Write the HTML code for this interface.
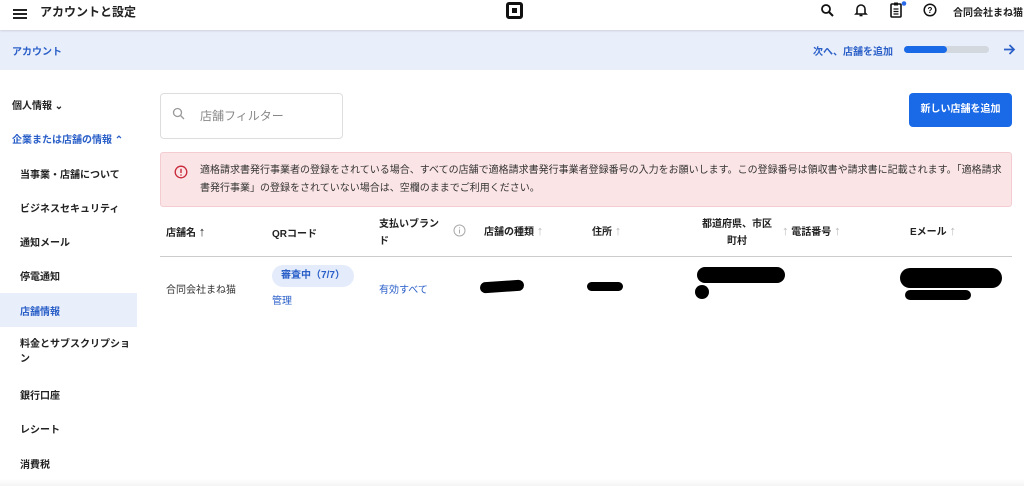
<!DOCTYPE html>
<html><head><meta charset="utf-8"><style>
*{margin:0;padding:0;box-sizing:border-box}
body{width:1024px;height:486px;overflow:hidden;background:#fff;font-family:"Liberation Sans","Noto Sans CJK JP",sans-serif;color:#222;position:relative}
.a{position:absolute;white-space:nowrap}
.hdr{position:absolute;left:0;top:0;width:1024px;height:30px;background:#fff;box-shadow:0 1px 2px rgba(0,0,0,.12);z-index:2}
.band{position:absolute;left:0;top:30px;width:1024px;height:40px;background:#e8eefa}
.side{font-size:10px;font-weight:bold;color:#222}
.blue{color:#2a5fc8}
.th{font-size:10px;font-weight:bold;color:#222}
.arr{color:#bbb;font-weight:normal;font-size:13px}
.blot{position:absolute;background:#000;border-radius:8px}
</style></head><body>
<div class="hdr">
 <div class="a" style="left:13px;top:9px;width:14px;height:2px;background:#222;box-shadow:0 4px 0 #222,0 8px 0 #222"></div>
 <div class="a" style="left:40px;top:3px;font-size:12px;font-weight:bold">アカウントと設定</div>
 <div class="a" style="left:506px;top:2px;width:17px;height:17px;border:3px solid #111;border-radius:3px"><div style="position:absolute;left:3px;top:3px;width:5px;height:5px;background:#111"></div></div>
 <svg class="a" style="left:820px;top:3px" width="14" height="14" viewBox="0 0 14 14"><circle cx="6" cy="6" r="4" fill="none" stroke="#111" stroke-width="1.8"/><path d="M9 9l4 4" stroke="#111" stroke-width="2"/></svg>
 <svg class="a" style="left:854px;top:2px" width="14" height="16" viewBox="0 0 14 16"><path d="M3 11V7a4 4 0 018 0v4l1 1H2z" fill="none" stroke="#111" stroke-width="1.6"/><path d="M5.5 13.5h3" stroke="#111" stroke-width="1.6"/></svg>
 <svg class="a" style="left:889px;top:1px" width="18" height="18" viewBox="0 0 18 18"><rect x="2" y="3" width="10" height="13" rx="1" fill="none" stroke="#111" stroke-width="1.6"/><rect x="5" y="1.5" width="4" height="3" fill="#111"/><path d="M4.5 8h5M4.5 10.5h5M4.5 13h5" stroke="#111" stroke-width="1.2"/><circle cx="15" cy="2.5" r="2.3" fill="#2a6ae8"/></svg>
 <svg class="a" style="left:923px;top:3px" width="14" height="14" viewBox="0 0 14 14"><circle cx="7" cy="7" r="5.8" fill="none" stroke="#111" stroke-width="1.5"/><text x="7" y="10" font-size="8" text-anchor="middle" font-weight="bold" font-family="Liberation Sans">?</text></svg>
 <div class="a" style="left:953px;top:4px;font-size:10px;font-weight:bold">合同会社まね猫</div>
</div>
<div class="band">
 <div class="a blue" style="left:12px;top:13px;font-size:10px;font-weight:bold">アカウント</div>
 <div class="a blue" style="left:813px;top:13px;font-size:10px;font-weight:bold">次へ、店舗を追加</div>
 <div class="a" style="left:904px;top:16px;width:85px;height:7px;background:#d3d7de;border-radius:4px"><div style="width:43px;height:7px;background:#1a6ae8;border-radius:4px"></div></div>
 <svg class="a" style="left:1003px;top:13px" width="13" height="13" viewBox="0 0 13 13"><path d="M1 6.5h10M6.5 2l4.5 4.5L6.5 11" fill="none" stroke="#2a5fc8" stroke-width="1.7"/></svg>
</div>
<div class="a side" style="left:12px;top:97px">個人情報 ⌄</div>
<div class="a side blue" style="left:12px;top:131px">企業または店舗の情報 ⌃</div>
<div class="a side" style="left:20px;top:166px">当事業・店舗について</div>
<div class="a side" style="left:20px;top:200px">ビジネスセキュリティ</div>
<div class="a side" style="left:20px;top:234px">通知メール</div>
<div class="a side" style="left:20px;top:268px">停電通知</div>
<div class="a" style="left:0;top:293px;width:137px;height:34px;background:#e8eefa"></div>
<div class="a side blue" style="left:20px;top:303px">店舗情報</div>
<div class="a side" style="left:20px;top:337px;white-space:normal;width:112px;line-height:15px">料金とサブスクリプション</div>
<div class="a side" style="left:20px;top:387px">銀行口座</div>
<div class="a side" style="left:20px;top:421px">レシート</div>
<div class="a side" style="left:20px;top:456px">消費税</div>
<div class="a" style="left:0;top:479px;width:1024px;height:7px;background:linear-gradient(#fff,#f4f4f4)"></div>

<div class="a" style="left:160px;top:93px;width:183px;height:46px;border:1px solid #ddd;border-radius:4px"></div>
<svg class="a" style="left:172px;top:107px" width="13" height="13" viewBox="0 0 13 13"><circle cx="5.5" cy="5.5" r="4" fill="none" stroke="#999" stroke-width="1.3"/><path d="M8.5 8.5l3.5 3.5" stroke="#999" stroke-width="1.3"/></svg>
<div class="a" style="left:200px;top:107px;font-size:12px;color:#888">店舗フィルター</div>
<div class="a" style="left:909px;top:93px;width:103px;height:34px;background:#1a6ae8;border-radius:4px;color:#fff;font-size:10px;font-weight:bold;text-align:center;line-height:34px">新しい店舗を追加</div>

<div class="a" style="left:160px;top:152px;width:852px;height:55px;background:#fbe4e6;border:1px solid #f3cdd1;border-radius:3px"></div>
<svg class="a" style="left:174px;top:165px" width="14" height="14" viewBox="0 0 14 14"><circle cx="7" cy="7" r="5.8" fill="none" stroke="#c8283a" stroke-width="1.3"/><path d="M7 3.8v4.2" stroke="#c8283a" stroke-width="1.4"/><circle cx="7" cy="10" r=".8" fill="#c8283a"/></svg>
<div class="a" style="left:200px;top:162px;width:805px;white-space:normal;font-size:10px;line-height:18px;color:#333">適格請求書発行事業者の登録をされている場合、すべての店舗で適格請求書発行事業者登録番号の入力をお願いします。この登録番号は領収書や請求書に記載されます。「適格請求書発行事業」の登録をされていない場合は、空欄のままでご利用ください。</div>

<div class="a th" style="left:166px;top:224px">店舗名 <span style="font-size:13px">↑</span></div>
<div class="a th" style="left:272px;top:225px">QRコード</div>
<div class="a th" style="left:379px;top:216px;line-height:17px">支払いブラン<br>ド</div>
<svg class="a" style="left:453px;top:224px" width="13" height="13" viewBox="0 0 13 13"><circle cx="6.5" cy="6.5" r="5.5" fill="none" stroke="#aaa"/><path d="M6.5 5.5v4" stroke="#aaa"/><circle cx="6.5" cy="3.8" r=".6" fill="#aaa"/></svg>
<div class="a th" style="left:484px;top:223px">店舗の種類 <span class="arr">↑</span></div>
<div class="a th" style="left:592px;top:223px">住所 <span class="arr">↑</span></div>
<div class="a th" style="left:702px;top:216px;line-height:17px;text-align:center">都道府県、市区<br>町村</div>
<div class="a th" style="left:782px;top:223px"><span class="arr">↑</span> 電話番号 <span class="arr">↑</span></div>
<div class="a th" style="left:910px;top:223px">Eメール <span class="arr">↑</span></div>
<div class="a" style="left:160px;top:256px;width:852px;height:1px;background:#ccc"></div>

<div class="a" style="left:166px;top:281px;font-size:10px;color:#333">合同会社まね猫</div>
<div class="a" style="left:272px;top:265px;width:82px;height:22px;background:#e4ecfb;border-radius:11px;font-size:10px;font-weight:bold;color:#2a5fc8;text-align:center;line-height:22px">審査中（7/7）</div>
<div class="a blue" style="left:272px;top:292px;font-size:10px">管理</div>
<div class="a blue" style="left:379px;top:281px;font-size:10px">有効すべて</div>
<div class="blot" style="left:480px;top:281px;width:44px;height:11px;transform:rotate(-4deg)"></div>
<div class="blot" style="left:587px;top:282px;width:36px;height:9px"></div>
<div class="blot" style="left:697px;top:267px;width:88px;height:16px;border-radius:10px"></div>
<div class="blot" style="left:695px;top:285px;width:14px;height:14px;border-radius:50%"></div>
<div class="blot" style="left:900px;top:268px;width:102px;height:20px;border-radius:10px"></div>
<div class="blot" style="left:905px;top:290px;width:66px;height:10px"></div>
</body></html>
